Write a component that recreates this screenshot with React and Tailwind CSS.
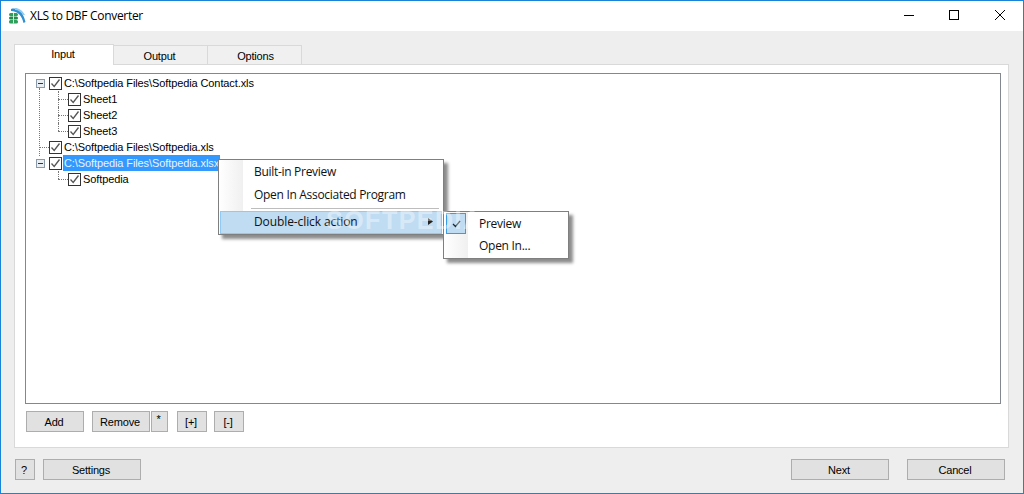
const uiFont = "font-['Liberation_Sans',Arial,sans-serif]"
const menuFont = "font-['Open_Sans',sans-serif]"

const Logo = () => (
  <svg width="17" height="16" viewBox="0 0 17 16" className="ml-2 -mt-px">
    <path d="M2 1 C8 -1 14 3 16.5 14 L14.5 15 C13 8 9 3 2 3 Z" fill="#2f8fd0" />
    <path d="M6 0 C10 0 13 2 16 7 L14.5 7 C12 4 9 2 6 2 Z" fill="#8ccaf0" />
    <rect x="0" y="5" width="9" height="3" rx="1.5" fill="#2e9e5b" />
    <rect x="0" y="8.5" width="9" height="3" rx="1.5" fill="#1f8a4a" />
    <rect x="0" y="12" width="9" height="3.5" rx="1.5" fill="#2e9e5b" />
    <path d="M4.5 5 V15.5" stroke="#d8f0df" strokeWidth="1" />
  </svg>
)

const Check = () => (
  <div className="w-[13px] h-[13px] border border-[#333] bg-white flex items-center justify-center shrink-0">
    <svg width="11" height="11" viewBox="0 0 11 11">
      <path d="M1.5 5.5 L4.2 8.5 L9.5 1.5" stroke="#555" strokeWidth="1.3" fill="none" />
    </svg>
  </div>
)

const Expander = () => (
  <div className="absolute left-[10px] top-[4px] w-[9px] h-[9px] border border-[#8a9aa8] bg-[#e8eef2] flex items-center justify-center">
    <div className="w-[5px] h-px bg-[#333]" />
  </div>
)

const TreeRow = ({ level = 0, text, expander, selected, lastChild, child }) => (
  <div className="relative h-4 flex items-center">
    {expander && <Expander />}
    {!expander && level === 0 && (
      <div className="absolute left-[14px] top-2 w-[9px] border-t border-dotted border-[#777]" />
    )}
    {child && (
      <>
        <div className={`absolute left-[32px] top-0 border-l border-dotted border-[#777] ${lastChild ? "h-2" : "h-4"}`} />
        <div className="absolute left-[32px] top-2 w-[10px] border-t border-dotted border-[#777]" />
      </>
    )}
    <div className={`${level === 0 ? "ml-[23px]" : "ml-[42px]"} flex items-center`}>
      <Check />
      <span
        className={`ml-px h-4 leading-4 pl-px pr-px text-[11px] whitespace-nowrap tracking-[-0.1px] ${
          selected ? "bg-[#3399ff] text-[#e8f3ff]" : "text-black"
        }`}
      >
        {text}
      </span>
    </div>
  </div>
)

const Btn = ({ className = "", children }) => (
  <button className={`h-[21px] border border-[#adadad] bg-[#e1e1e1] text-[11px] tracking-[-0.2px] leading-none text-black pt-px pr-[2px] ${uiFont} ${className}`}>
    {children}
  </button>
)

export default function App() {
  return (
    <div className={`relative w-[1024px] h-[494px] border border-[#1883d7] bg-[#eeeeee] flex flex-col overflow-hidden ${uiFont}`}>
      {/* title bar */}
      <div className="h-[30px] bg-white flex items-center shrink-0">
        <Logo />
        <span className={`ml-[4px] text-[12px] tracking-[-0.3px] text-black ${menuFont}`}>XLS to DBF Converter</span>
        <div className="ml-auto flex items-center mb-[2px]">
          <svg width="12" height="12" viewBox="0 0 12 12" className="mr-[33px]"><path d="M1 6.5 H11" stroke="#000" /></svg>
          <svg width="12" height="12" viewBox="0 0 12 12" className="mr-[34px]"><rect x="1.5" y="1.5" width="9" height="9" fill="none" stroke="#000" /></svg>
          <svg width="12" height="12" viewBox="0 0 12 12" className="mr-[17px]"><path d="M1 1 L11 11 M11 1 L1 11" stroke="#000" /></svg>
        </div>
      </div>

      {/* tabs */}
      <div className="ml-[13px] mt-[13px] flex items-end h-[21px] relative z-10 text-[11px] tracking-[-0.2px]">
        <div className="w-[100px] h-[21px] bg-white border border-b-0 border-[#d9d9d9] text-center leading-[18px] pr-[2px]">Input</div>
        <div className="w-[94px] h-[19px] mb-px bg-[#f0f0f0] border border-l-0 border-b-0 border-[#d9d9d9] text-center leading-[21px] pr-[2px]">Output</div>
        <div className="w-[94px] h-[19px] mb-px bg-[#f0f0f0] border border-l-0 border-b-0 border-[#d9d9d9] text-center leading-[21px] pl-[2px]">Options</div>
      </div>

      {/* tab panel */}
      <div className="ml-[13px] mr-[14px] -mt-px h-[384px] bg-white border border-[#d9d9d9] pl-[10px] pr-[7px] pt-[8px] flex flex-col">
        <div className="h-[331px] border border-[#828790] bg-white pt-px">
          <TreeRow text="C:\Softpedia Files\Softpedia Contact.xls" expander />
          <TreeRow level={1} child text="Sheet1" />
          <TreeRow level={1} child text="Sheet2" />
          <TreeRow level={1} child lastChild text="Sheet3" />
          <TreeRow text="C:\Softpedia Files\Softpedia.xls" />
          <TreeRow text="C:\Softpedia Files\Softpedia.xlsx" expander selected />
          <TreeRow level={1} child lastChild text="Softpedia" />
        </div>
        <div className="mt-[7px] ml-px flex">
          <Btn className="w-[58px]">Add</Btn>
          <Btn className="ml-2 w-[58px]">Remove</Btn>
          <Btn className="ml-px w-[17px] pb-[5px]">*</Btn>
          <Btn className="ml-[9px] w-[30px]">[+]</Btn>
          <Btn className="ml-[7px] w-[30px]">[-]</Btn>
        </div>
      </div>

      {/* bottom buttons */}
      <div className="ml-[14px] mr-[18px] mt-[11px] flex">
        <Btn className="w-5">?</Btn>
        <Btn className="ml-2 w-[98px]">Settings</Btn>
        <Btn className="ml-auto w-[98px]">Next</Btn>
        <Btn className="ml-[18px] w-[98px]">Cancel</Btn>
      </div>

      {/* tree vertical guide */}
      <div className="absolute left-[38px] top-[87px] h-[68px] border-l border-dotted border-[#777]" />

      {/* context menu */}
      <div className={`absolute left-[217px] top-[158px] w-[226px] h-[76px] bg-white border border-[#7f7f7f] shadow-[4px_4px_3px_rgba(0,0,0,0.45)] z-20 ${menuFont} text-[12px] tracking-[-0.3px] text-[#111]`}>
        <div className="absolute left-0 top-0 bottom-0 w-6 bg-gradient-to-r from-white to-[#f0f0f0]" />
        <div className="relative h-[24px] pl-[35px] leading-[24px]">Built-in Preview</div>
        <div className="relative h-[21px] pl-[35px] leading-[21px]">Open In Associated Program</div>
        <div className="relative ml-[32px] mr-1 mt-[3px] h-px bg-[#bdbdbd]" />
        <div className="relative mx-px mt-[2px] h-[23px] bg-[#c0dcf3] border border-[#90c8f6] pl-[33px] pb-[2px] tracking-[-0.1px] flex items-center">
          Double-click action
          <svg width="5" height="7" viewBox="0 0 5 7" className="absolute right-[8px] top-[6px]"><path d="M0 0 L5 3.5 L0 7 Z" fill="#222" /></svg>
        </div>
      </div>

      {/* submenu */}
      <div className={`absolute left-[442px] top-[210px] w-[126px] h-[48px] bg-white border border-[#7f7f7f] shadow-[4px_4px_3px_rgba(0,0,0,0.45)] z-30 ${menuFont} text-[12px] tracking-[-0.27px] text-[#111]`}>
        <div className="absolute left-0 top-0 bottom-0 w-6 bg-gradient-to-r from-white to-[#f0f0f0]" />
        <div className="absolute left-[2px] top-[1px] w-5 h-[21px] bg-[#c0dcf3] border border-[#3c9be8] flex items-center justify-center">
          <svg width="9" height="8" viewBox="0 0 9 8"><path d="M1 4 L3.5 6.5 L8 1" stroke="#222" strokeWidth="1.2" fill="none" /></svg>
        </div>
        <div className="relative h-[23px] pl-[35px] leading-[23px]">Preview</div>
        <div className="relative h-[22px] pl-[35px] leading-[22px]">Open In...</div>
      </div>

      {/* watermark */}
      <div className="absolute left-[325px] top-[207px] z-40 text-[25px] font-bold tracking-[1.5px] leading-none text-white/40 font-['Liberation_Sans',sans-serif] pointer-events-none">
        SOFTPEDIA
      </div>
    </div>
  )
}
